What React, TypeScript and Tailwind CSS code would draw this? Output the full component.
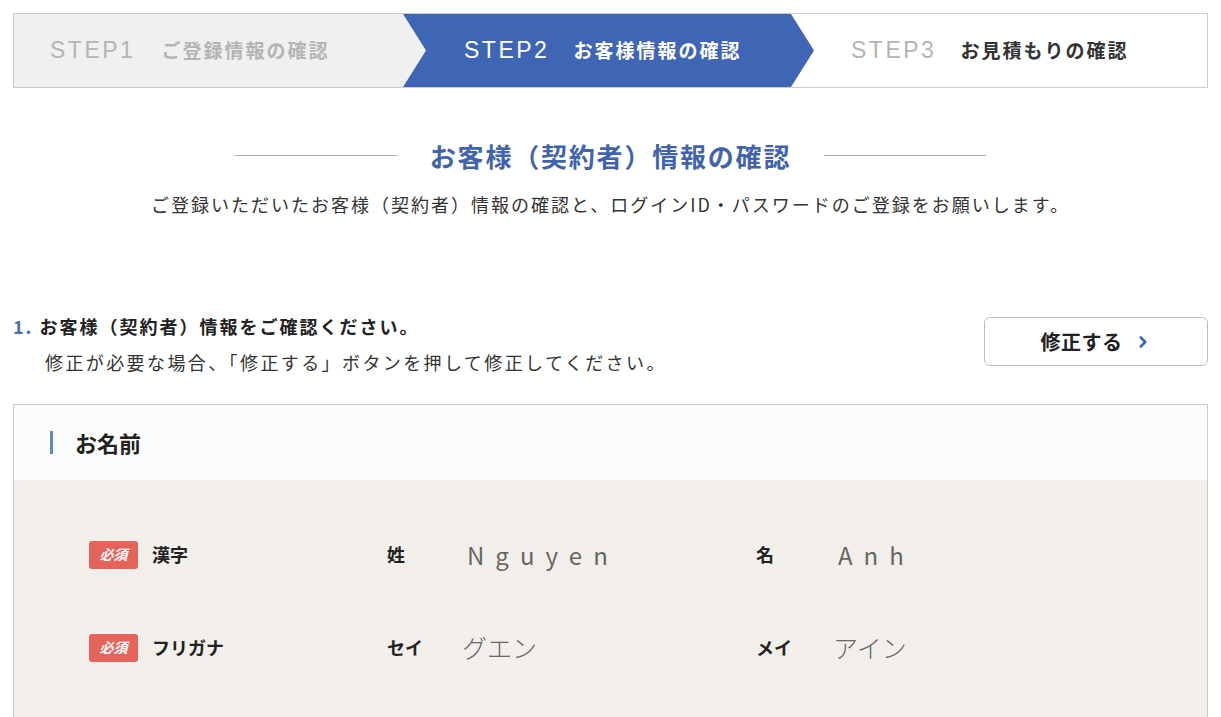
import { ChevronRight } from "lucide-react";

const jp = "font-['Noto_Sans_CJK_JP','Noto_Sans',sans-serif]";
const latin = "font-['Liberation_Sans','Noto_Sans_CJK_JP',sans-serif]";

function Stepper() {
  return (
    <div className="mx-[13px] mt-[13px] flex h-[75px] border border-[#cccccc] bg-white">
      {/* step 1 */}
      <div className="flex w-[412px] shrink-0 items-center bg-[#f0f0f0] pl-[36px] [clip-path:polygon(0_0,389px_0,412px_50%,389px_100%,0_100%)]">
        <span className={`${latin} text-[23px] tracking-[2.5px] text-[#b4b4b4]`}>STEP1</span>
        <span className={`${jp} ml-[26px] text-[19px] font-bold tracking-[2px] text-[#b4b4b4]`}>
          ご登録情報の確認
        </span>
      </div>
      {/* step 2 */}
      <div className="-ml-[23px] flex w-[411px] shrink-0 items-center bg-[#3f66b5] pl-[61px] [clip-path:polygon(0_0,388px_0,411px_50%,388px_100%,0_100%,23px_50%)]">
        <span className={`${latin} text-[23px] tracking-[2.5px] text-white`}>STEP2</span>
        <span className={`${jp} ml-[24px] text-[19px] font-bold tracking-[2px] text-white`}>
          お客様情報の確認
        </span>
      </div>
      {/* step 3 */}
      <div className="flex flex-1 items-center pl-[37px]">
        <span className={`${latin} text-[23px] tracking-[2.5px] text-[#b4b4b4]`}>STEP3</span>
        <span className={`${jp} ml-[24px] text-[19px] font-bold tracking-[2px] text-[#333333]`}>
          お見積もりの確認
        </span>
      </div>
    </div>
  );
}

function NameRow({ label, l1, v1, l2, v2, latinValue }: { label: string; l1: string; v1: string; l2: string; v2: string; latinValue?: boolean }) {
  const valueCls = latinValue
    ? "text-[24px] tracking-[11px] pl-[5px]"
    : "text-[25px] font-light";
  return (
    <div className="grid h-[93px] grid-cols-[298px_75px_294px_77px_1fr] items-center">
      <div className="flex items-center">
        <span className="flex h-[28px] w-[49px] items-center justify-center rounded-[3px] bg-[#e4645c] text-[14px] font-bold italic text-white">
          必須
        </span>
        <span className="ml-[14px] text-[18px] font-bold text-[#222222]">{label}</span>
      </div>
      <span className="text-[18px] font-bold text-[#222222]">{l1}</span>
      <span className={`${valueCls} text-[#666666]`}>{v1}</span>
      <span className="text-[18px] font-bold text-[#222222]">{l2}</span>
      <span className={`${valueCls} text-[#666666]`}>{v2}</span>
    </div>
  );
}

export default function App() {
  return (
    <div className={`${jp} min-h-screen bg-white text-[#333333]`}>
      <Stepper />

      {/* heading */}
      <div className="mt-[48px] flex items-center justify-center gap-[33px]">
        <div className="h-px w-[162px] bg-[#aaaaaa]" />
        <h1 className="text-[26px] font-bold tracking-[1.8px] text-[#3f64ad]">
          お客様（契約者）情報の確認
        </h1>
        <div className="h-px w-[162px] bg-[#aaaaaa]" />
      </div>
      <p className="mt-[16px] text-center text-[18px] tracking-[2px] text-[#333333]">
        ご登録いただいたお客様（契約者）情報の確認と、ログインID・パスワードのご登録をお願いします。
      </p>

      {/* section 1 */}
      <div className="mx-[13px] mt-[94px] flex items-start justify-between">
        <div>
          <div className="flex items-center text-[18px] font-bold leading-[28px] tracking-[2px]">
            <span className="text-[#4a6db5]">1.</span>
            <span className="ml-[6px] text-[#222222]">お客様（契約者）情報をご確認ください。</span>
          </div>
          <p className="mt-[8px] pl-[32px] text-[18px] leading-[28px] tracking-[2.4px] text-[#333333]">
            修正が必要な場合、「修正する」ボタンを押して修正してください。
          </p>
        </div>
        <button className="mt-[5px] flex h-[49px] w-[224px] items-center justify-center gap-[11px] rounded-[6px] border border-[#bbbbbb] bg-white">
          <span className="text-[20px] font-bold tracking-[0.5px] text-[#222222]">修正する</span>
          <ChevronRight className="h-[18px] w-[18px] text-[#3f66b5]" strokeWidth={3.5} />
        </button>
      </div>

      {/* name card */}
      <div className="mx-[13px] mt-[28px] border border-[#cccccc]">
        <div className="flex h-[75px] items-center bg-[#fcfcfc] pl-[36px]">
          <div className="h-[23px] w-[3px] bg-[#5a88c0]" />
          <span className="ml-[22px] text-[22px] font-bold text-[#222222]">お名前</span>
        </div>
        <div className="bg-[#f2efea] pl-[75px] pt-[28px] pb-[40px]">
          <NameRow label="漢字" l1="姓" v1="Nguyen" l2="名" v2="Anh" latinValue />
          <NameRow label="フリガナ" l1="セイ" v1="グエン" l2="メイ" v2="アイン" />
        </div>
      </div>
    </div>
  );
}
